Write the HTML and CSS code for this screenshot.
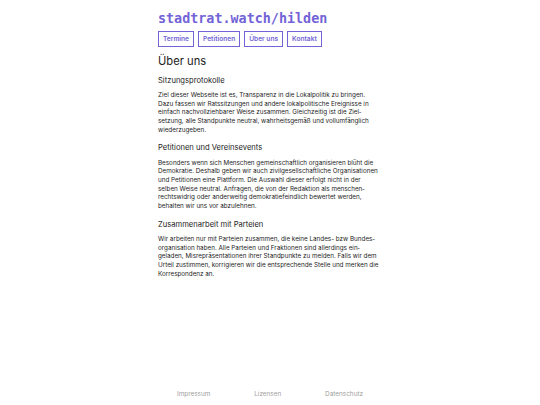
FILE: index.html
```html
<!DOCTYPE html>
<html lang="de">
<head>
<meta charset="utf-8">
<title>stadtrat.watch/hilden</title>
<link rel="stylesheet" href="styles.css">
</head>
<body>
<div class="page">
  <header class="header">
    <h1 class="logo">stadtrat.watch/hilden</h1>
    <nav class="nav">
      <a class="nav-btn" href="#">Termine</a>
      <a class="nav-btn" href="#">Petitionen</a>
      <a class="nav-btn" href="#">Über uns</a>
      <a class="nav-btn" href="#">Kontakt</a>
    </nav>
  </header>
  <main class="main">
    <h2 class="title">Über uns</h2>
    <h3 class="sub">Sitzungsprotokolle</h3>
    <p class="text">Ziel dieser Webseite ist es, Transparenz in die Lokalpolitik zu bringen. Dazu fassen wir Ratssitzungen und andere lokalpolitische Ereignisse in einfach nachvollziehbarer Weise zusammen. Gleichzeitig ist die Ziel&shy;setzung, alle Standpunkte neutral, wahrheitsgemäß und vollumfänglich wiederzugeben.</p>
    <h3 class="sub">Petitionen und Vereinsevents</h3>
    <p class="text">Besonders wenn sich Menschen gemeinschaftlich organisieren blüht die Demokratie. Deshalb geben wir auch zivilgesellschaftliche Organisationen und Petitionen eine Plattform. Die Auswahl dieser erfolgt nicht in der selben Weise neutral. Anfragen, die von der Redaktion als menschen&shy;rechtswidrig oder anderweitig demokratiefeindlich bewertet werden, behalten wir uns vor abzulehnen.</p>
    <h3 class="sub">Zusammenarbeit mit Parteien</h3>
    <p class="text">Wir arbeiten nur mit Parteien zusammen, die keine Landes- bzw Bundes&shy;organisation haben. Alle Parteien und Fraktionen sind allerdings ein&shy;geladen, Misrepräsentationen ihrer Standpunkte zu melden. Falls wir dem Urteil zustimmen, korrigieren wir die entsprechende Stelle und merken die Korrespondenz an.</p>
  </main>
  <footer class="footer">
    <a class="foot-link" href="#">Impressum</a>
    <a class="foot-link" href="#">Lizensen</a>
    <a class="foot-link" href="#">Datenschutz</a>
  </footer>
</div>
</body>
</html>
```
FILE: styles.css
```css
html, body {
  margin: 0;
  padding: 0;
  background: #ffffff;
}
body {
  font-family: Inter, "Noto Sans", sans-serif;
  color: #1c1c1c;
}
.page {
  width: 224px;
  margin: 0 auto;
  min-height: 100vh;
  display: flex;
  flex-direction: column;
  box-sizing: border-box;
  padding-top: 10px;
}
.logo {
  margin: 0;
  font-family: "DejaVu Sans Mono", "Liberation Mono", monospace;
  font-weight: bold;
  font-size: 13.4px;
  line-height: 18px;
  color: #7264d6;
  letter-spacing: 0;
}
.nav {
  display: flex;
  gap: 4px;
  margin-top: 3px;
}
.nav-btn {
  display: block;
  border: 1px solid #7264d6;
  color: #7264d6;
  font-size: 6.6px;
  font-weight: 600;
  text-decoration: none;
  padding: 3px 4px;
  line-height: 8px;
}
.main {
  flex: 1;
  padding-top: 6px;
}
.title {
  margin: 0 0 5.7px;
  font-size: 11.2px;
  font-weight: 400;
  line-height: 16px;
}
.sub {
  margin: 0 0 5.2px;
  font-size: 7.6px;
  font-weight: 400;
  line-height: 11px;
}
.text {
  margin: 0 0 8px;
  font-size: 6.3px;
  line-height: 8.7px;
  hyphens: manual;
}
.footer {
  display: flex;
  justify-content: space-around;
  padding: 0 0 6px;
  width: 230px;
  margin-left: -3px;
}
.foot-link {
  color: #a0a0a0;
  font-size: 6.4px;
  text-decoration: none;
  line-height: 9px;
}
```
